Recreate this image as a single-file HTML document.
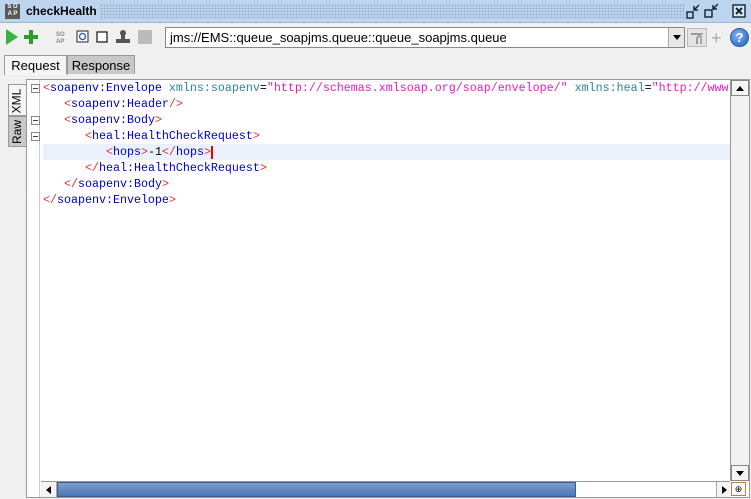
<!DOCTYPE html>
<html><head><style>
*{margin:0;padding:0;box-sizing:border-box}
body{width:751px;height:499px;background:#f0f0f0;position:relative;overflow:hidden;font-family:"Liberation Sans",sans-serif}
.abs{position:absolute}
.title{left:0;top:0;width:751px;height:23px;background:#bcd4ee;border-bottom:1px solid #9fb6d0}
.dots{left:100px;top:4px;width:585px;height:15px;background-image:radial-gradient(#9ab3cf 0.8px,transparent 0.9px);background-size:3px 3px}
.code{font-family:"Liberation Mono",monospace;font-size:11.67px;line-height:16px;white-space:pre}
.t{color:#0000c8}.b{color:#e83030}.a{color:#2a8a8a}.v{color:#e020c0}.k{color:#000}
.fold{width:9px;height:9px;border:1px solid #888;background:#fff;left:31px}
.fold:after{content:"";position:absolute;left:1px;top:3px;width:5px;height:1px;background:#444}
</style></head><body>
<div class="abs title"></div>
<div class="abs" style="left:5px;top:4px;width:15px;height:15px;background:#5a5a5a;color:#fff;font-size:6px;line-height:7px;text-align:center;font-weight:bold">S O<br>A P</div>
<div class="abs" style="left:26px;top:4px;font-size:12px;font-weight:bold;color:#000">checkHealth</div>
<div class="abs dots"></div>
<svg class="abs" style="left:686px;top:3px" width="60" height="18">
<rect x="1" y="9" width="6" height="6" fill="none" stroke="#123" stroke-width="1.4"/><path d="M13 2 L8 7 M8 3 V7 H12" stroke="#123" stroke-width="1.4" fill="none"/>
<rect x="19" y="7" width="7" height="7" fill="none" stroke="#123" stroke-width="1.4"/><path d="M32 1 L27 6 M27 2 V6 H31" stroke="#123" stroke-width="1.4" fill="none"/>
<rect x="47" y="2" width="12" height="12" fill="#dde8f5" stroke="#123" stroke-width="1.4"/><path d="M50 5 L56 11 M56 5 L50 11" stroke="#123" stroke-width="2"/>
</svg>
<svg class="abs" style="left:4px;top:28px" width="150" height="18">
<path d="M2 1 L14 9 L2 17Z" fill="#3cb043"/>
<path d="M27 2 V16 M20 9 H34" stroke="#2aa02a" stroke-width="4"/>
<text x="52" y="8" font-size="6" fill="#888" font-weight="bold">SO</text><text x="52" y="15" font-size="6" fill="#888" font-weight="bold">AP</text>
<rect x="73" y="3" width="11" height="11" fill="#fff" stroke="#222"/><circle cx="78.5" cy="8.5" r="3" fill="none" stroke="#2a6cc0" stroke-width="1.4"/>
<rect x="93" y="4" width="10" height="10" fill="#fff" stroke="#111" stroke-width="1.2"/>
<circle cx="119" cy="5" r="3" fill="#555"/><rect x="117" y="7" width="4" height="5" fill="#555"/><rect x="112" y="11" width="14" height="4" fill="#555"/>
<rect x="134" y="2" width="14" height="14" fill="#bbb"/>
</svg>
<div class="abs" style="left:165px;top:27px;width:520px;height:21px;background:#fff;border:1px solid #888;font-size:13px;line-height:19px;padding-left:4px">jms://EMS::queue_soapjms.queue::queue_soapjms.queue</div>
<div class="abs" style="left:668px;top:28px;width:16px;height:19px;background:#e8e8e8;border-left:1px solid #aaa"><div style="margin:7px auto 0;width:0;height:0;border-left:4px solid transparent;border-right:4px solid transparent;border-top:5px solid #000"></div></div>
<div class="abs" style="left:687px;top:28px;width:20px;height:19px;border:1px solid #bbb;background:#e4e4e4"><svg width="18" height="17"><path d="M3 5 H13 L9 9 V15" stroke="#999" stroke-width="2" fill="none"/><path d="M13 5 V15" stroke="#aaa" stroke-width="2"/></svg></div>
<div class="abs" style="left:711px;top:29px;color:#aaa;font-size:18px;line-height:18px">+</div>
<div class="abs" style="left:730px;top:28px;width:19px;height:19px;border-radius:50%;background:radial-gradient(circle at 40% 35%,#7fb2f0,#1d5fc0);border:1px solid #2a5aa0;color:#fff;font-weight:bold;font-size:13px;text-align:center;line-height:17px">?</div>
<div class="abs" style="left:4px;top:55px;width:63px;height:20px;background:#f5f5f5;border:1px solid #999;border-bottom:none;font-size:13px;text-align:center;line-height:19px">Request</div>
<div class="abs" style="left:67px;top:55px;width:68px;height:19px;background:#c8c8c8;border:1px solid #999;border-bottom:none;font-size:13px;text-align:center;line-height:19px">Response</div>
<div class="abs" style="left:8px;top:84px;width:18px;height:32px;background:#f5f5f5;border:1px solid #999;border-right:none"><div style="transform:rotate(-90deg);font-size:12px;position:absolute;left:-5px;top:9px">XML</div></div>
<div class="abs" style="left:8px;top:116px;width:18px;height:31px;background:#c8c8c8;border:1px solid #999;border-right:none"><div style="transform:rotate(-90deg);font-size:12px;position:absolute;left:-4px;top:8px">Raw</div></div>
<div class="abs" style="left:26px;top:79px;width:724px;height:419px;background:#fff;border:1px solid #999"></div>
<div class="abs" style="left:27px;top:80px;width:13px;height:417px;background:#fff;border-right:1px solid #ccc"></div>
<div class="abs fold" style="top:84px"></div><div class="abs fold" style="top:116px"></div><div class="abs fold" style="top:132px"></div>
<div class="abs" style="left:43px;top:144px;width:687px;height:16px;background:#eaf1fb"></div>
<div class="abs code" style="left:43px;top:80px;width:687px;overflow:hidden"><span class="b">&lt;</span><span class="t">soapenv:Envelope</span> <span class="a">xmlns:soapenv</span>=<span class="v">"http://schemas.xmlsoap.org/soap/envelope/"</span> <span class="a">xmlns:heal</span>=<span class="v">"http://www.tibco.com"</span>
   <span class="b">&lt;</span><span class="t">soapenv:Header</span><span class="b">/&gt;</span>
   <span class="b">&lt;</span><span class="t">soapenv:Body</span><span class="b">&gt;</span>
      <span class="b">&lt;</span><span class="t">heal:HealthCheckRequest</span><span class="b">&gt;</span>
         <span class="b">&lt;</span><span class="t">hops</span><span class="b">&gt;</span><span class="k">-1</span><span class="b">&lt;/</span><span class="t">hops</span><span class="b">&gt;</span>
      <span class="b">&lt;/</span><span class="t">heal:HealthCheckRequest</span><span class="b">&gt;</span>
   <span class="b">&lt;/</span><span class="t">soapenv:Body</span><span class="b">&gt;</span>
<span class="b">&lt;/</span><span class="t">soapenv:Envelope</span><span class="b">&gt;</span></div>
<div class="abs" style="left:211px;top:146px;width:2px;height:13px;background:#e00"></div>
<div class="abs" style="left:730px;top:80px;width:19px;height:401px;background:#f2f2f2;border-left:1px solid #999">
<div style="height:16px;border:1px solid #888;background:#f4f4f4"><div style="margin:5px auto 0;width:0;height:0;border-left:4px solid transparent;border-right:4px solid transparent;border-bottom:5px solid #000"></div></div>
<div style="position:absolute;bottom:0;left:0;width:18px;height:16px;border:1px solid #888;background:#f4f4f4"><div style="margin:5px auto 0;width:0;height:0;border-left:4px solid transparent;border-right:4px solid transparent;border-top:5px solid #000"></div></div>
</div>
<div class="abs" style="left:41px;top:481px;width:689px;height:16px;background:#fff;border-top:1px solid #999">
<div style="position:absolute;left:0;top:0;width:16px;height:15px;background:#f4f4f4;border-right:1px solid #aaa"><div style="margin:4px 0 0 5px;width:0;height:0;border-top:4px solid transparent;border-bottom:4px solid transparent;border-right:5px solid #000"></div></div>
<div style="position:absolute;left:16px;top:0;width:519px;height:15px;background:linear-gradient(#7b9ed0,#4d74b4);border:1px solid #3a5d9a"></div>
<div style="position:absolute;right:0;top:0;width:14px;height:15px;background:#f4f4f4;border-left:1px solid #aaa"><div style="margin:4px 0 0 5px;width:0;height:0;border-top:4px solid transparent;border-bottom:4px solid transparent;border-left:5px solid #000"></div></div>
</div>
<div class="abs" style="left:731px;top:482px;width:15px;height:14px;border:1px solid #c08040;background:#fff;font-size:9px;line-height:12px;text-align:center">⊕</div>
</body></html>
